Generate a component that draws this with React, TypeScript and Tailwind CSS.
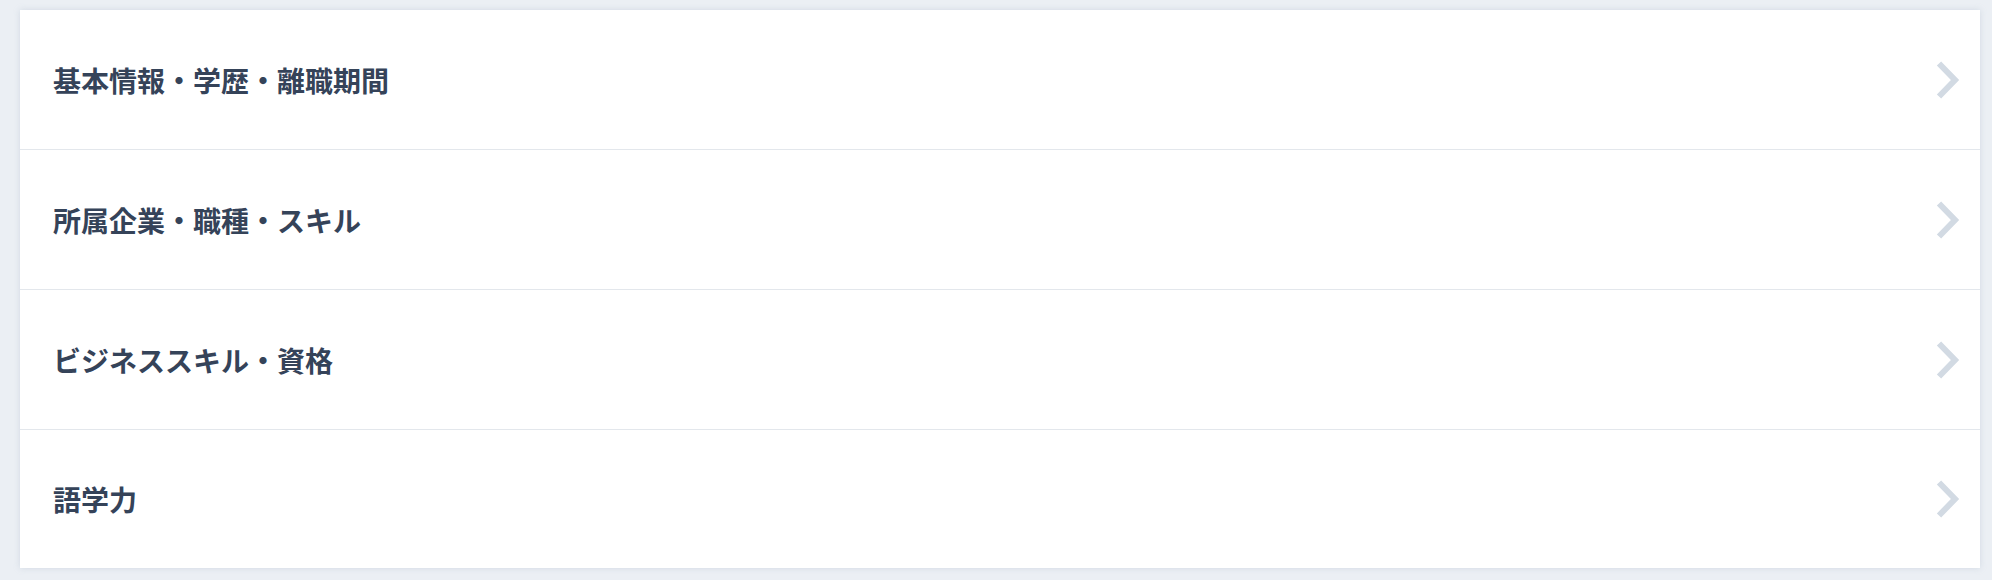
import React from "react";

const items = [
  "基本情報・学歴・離職期間",
  "所属企業・職種・スキル",
  "ビジネススキル・資格",
  "語学力",
];

function Chevron() {
  return (
    <svg width="24" height="38" viewBox="0 0 24 38" fill="none" aria-hidden="true">
      <polyline points="3,2.5 19,19 3,35.5" stroke="#d2dae3" strokeWidth="6" strokeLinejoin="miter" />
    </svg>
  );
}

export default function App() {
  return (
    <div className="min-h-[580px] w-full bg-[#ebeff4] pl-5 pr-3 pt-[10px] pb-3">
      <div className="bg-white shadow-[0_0_6px_rgba(160,175,195,0.35)]">
        {items.map((label, i) => (
          <div
            key={label}
            className={`flex items-center justify-between pl-[33px] pr-[20px] ${
              i < items.length - 1 ? "h-[140px] border-b border-[#e3e7ec]" : "h-[138px]"
            }`}
          >
            <span
              className="text-[28px] font-bold text-[#354359]"
              style={{ fontFamily: '"Noto Sans CJK JP", "Noto Sans", sans-serif' }}
            >
              {label}
            </span>
            <Chevron />
          </div>
        ))}
      </div>
    </div>
  );
}
